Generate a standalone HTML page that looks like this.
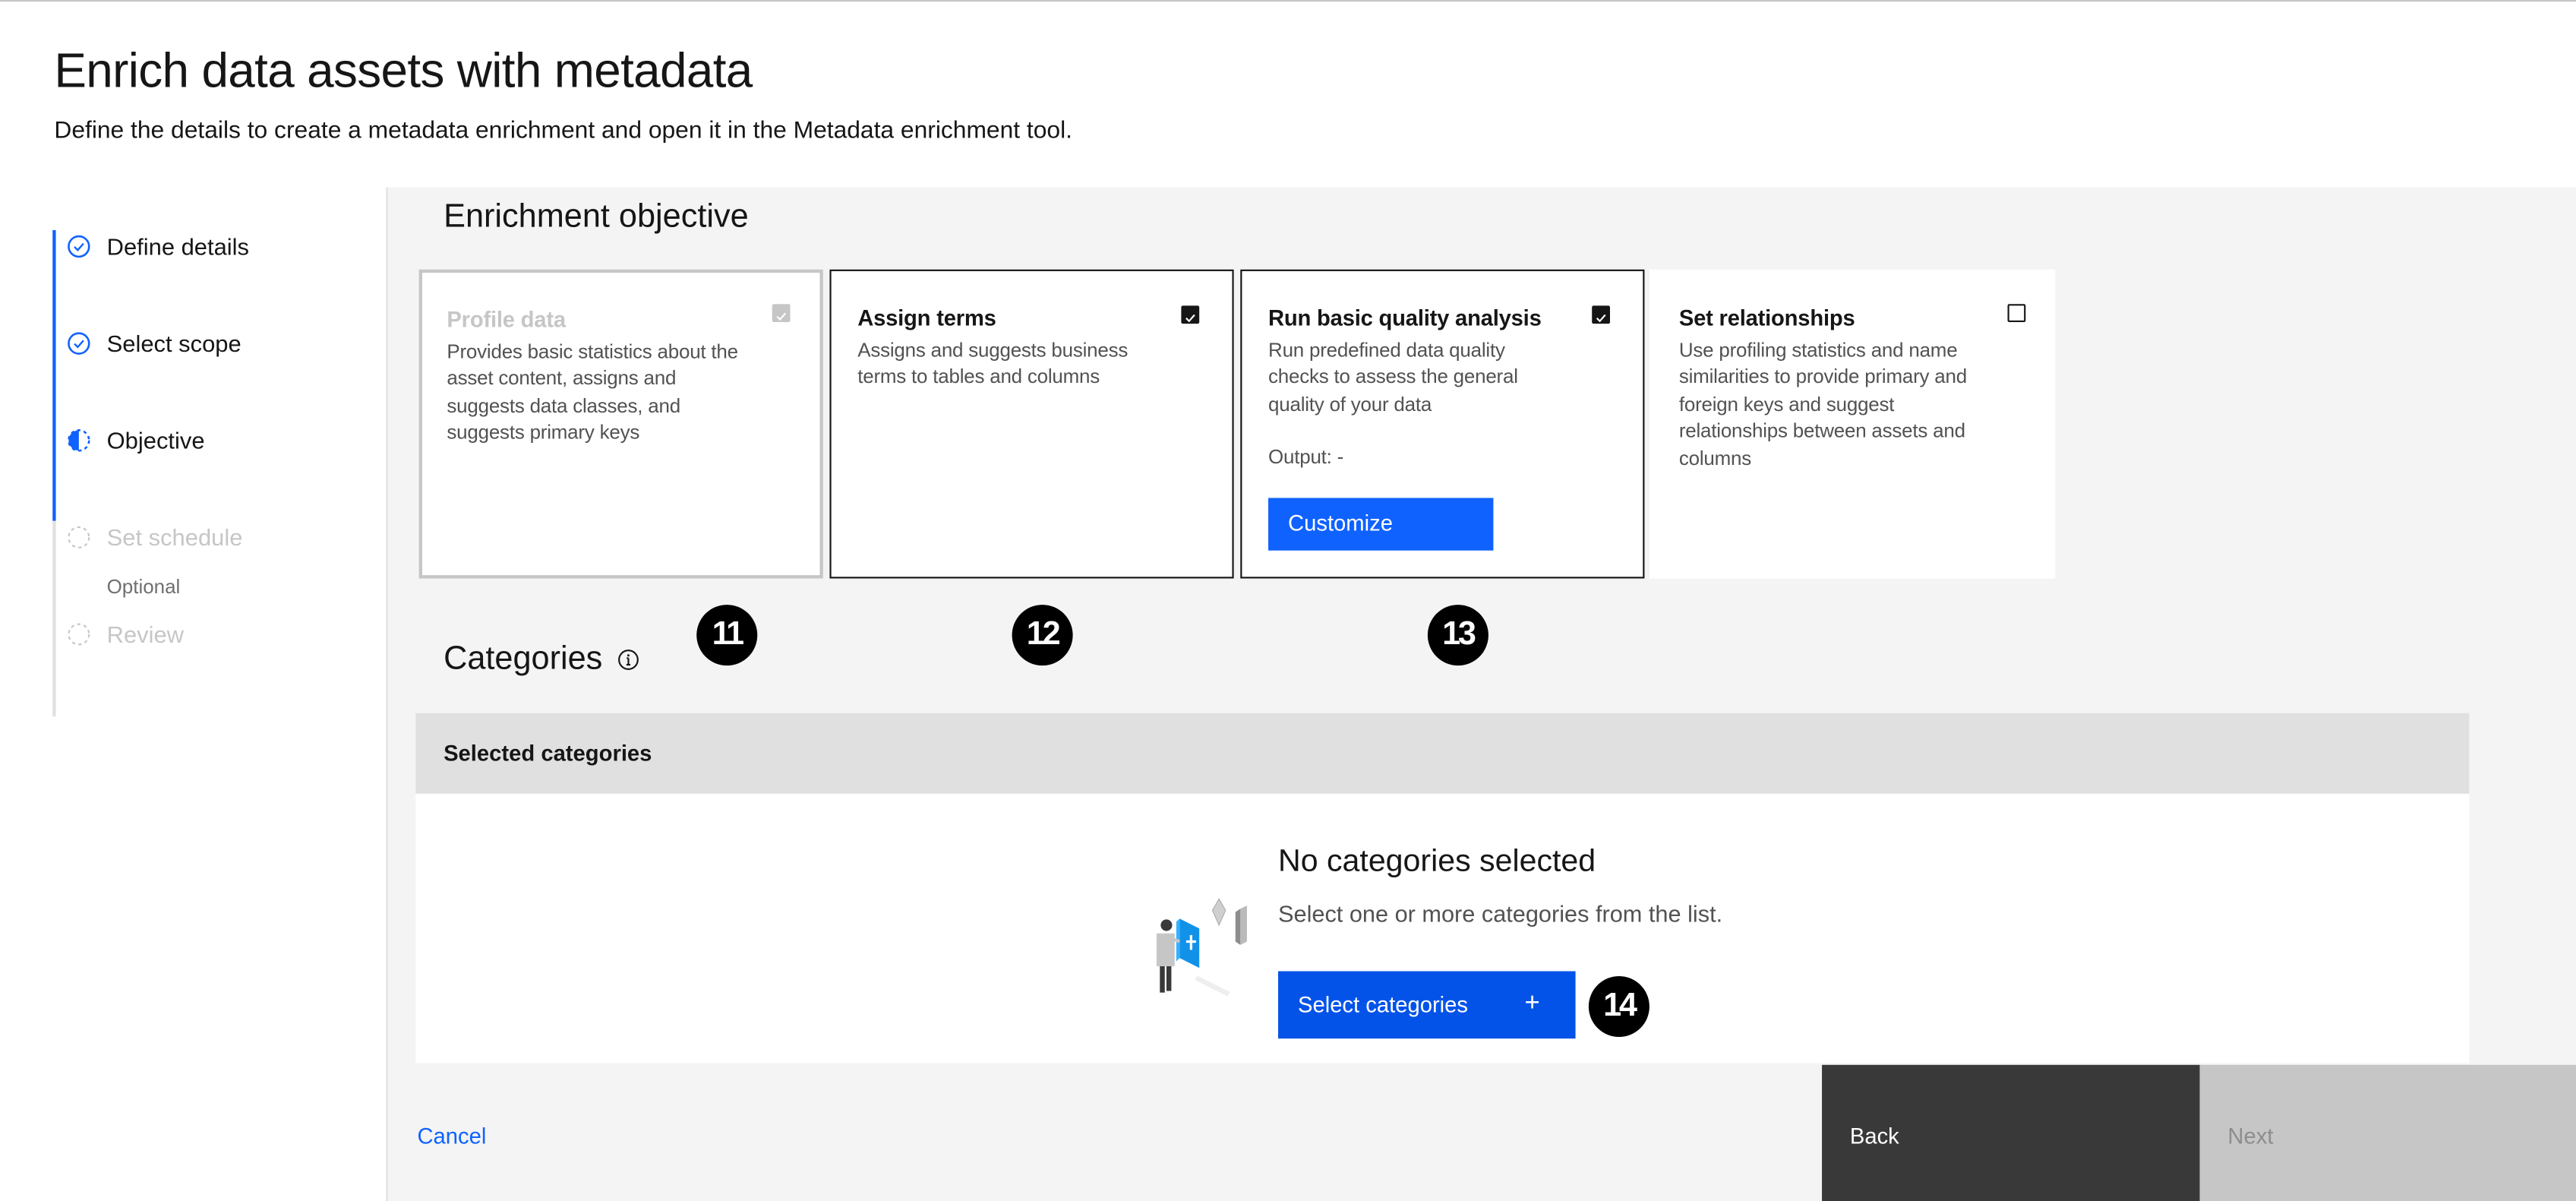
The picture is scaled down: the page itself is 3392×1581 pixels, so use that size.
<!DOCTYPE html>
<html><head><meta charset="utf-8"><style>
*{box-sizing:border-box;margin:0;padding:0}
html,body{width:3392px;height:1580px;overflow:hidden;background:#f4f4f4}
#w{position:absolute;left:0;top:0;width:1568px;height:731px;transform:scale(2.16327);transform-origin:0 0;font-family:"Liberation Sans",sans-serif;color:#161616;background:#f4f4f4}
.a{position:absolute}
.hdr{left:0;top:0;width:1568px;height:114px;background:#fff;border-top:1px solid #c6c6c6}
.side{left:0;top:114px;width:236px;height:617px;background:#fff;border-right:1px solid #e0e0e0}
.step{left:65px;font-size:14.3px;white-space:nowrap}
.card{top:164px;height:188px;width:246px;background:#fff;padding:20px 16px 0 16px}
.card h3{font-size:13.5px;font-weight:bold;margin-top:2px;margin-bottom:4px;letter-spacing:-.1px}
.card p{font-size:12px;line-height:16.4px;color:#525252;letter-spacing:-.1px;max-width:182px}
.cb{position:absolute;right:20px;top:21px;width:11px;height:11px;background:#161616;border-radius:1px}
.badge{width:37px;height:37px;border-radius:50%;background:#000;color:#fff;font-weight:bold;font-size:20px;line-height:37px;text-align:center;letter-spacing:-1.5px}
</style></head><body><div id="w">
<div class="a hdr"></div>
<div class="a" style="left:33px;top:27px;font-size:29.5px;letter-spacing:-.3px">Enrich data assets with metadata</div>
<div class="a" style="left:33px;top:72px;font-size:14.7px">Define the details to create a metadata enrichment and open it in the Metadata enrichment tool.</div>
<div class="a side"></div>
<div class="a" style="left:32px;top:140px;width:2px;height:177px;background:#0f62fe"></div>
<div class="a" style="left:32px;top:317px;width:2px;height:119px;background:#e0e0e0"></div>
<svg class="a" style="left:41px;top:143px" width="14" height="14" viewBox="0 0 14 14"><circle cx="7" cy="7" r="6.2" fill="none" stroke="#0f62fe" stroke-width="1.2"/><path d="M4.3 7.2l2 2 3.5-4" fill="none" stroke="#0f62fe" stroke-width="1.1"/></svg>
<svg class="a" style="left:41px;top:202px" width="14" height="14" viewBox="0 0 14 14"><circle cx="7" cy="7" r="6.2" fill="none" stroke="#0f62fe" stroke-width="1.2"/><path d="M4.3 7.2l2 2 3.5-4" fill="none" stroke="#0f62fe" stroke-width="1.1"/></svg>
<svg class="a" style="left:41px;top:261px" width="14" height="14" viewBox="0 0 14 14"><path d="M7 .8A6.2 6.2 0 0 0 7 13.2z" fill="#0f62fe"/><circle cx="7" cy="7" r="6.2" fill="none" stroke="#0f62fe" stroke-width="1.2" stroke-dasharray="2 2"/></svg>
<svg class="a" style="left:41px;top:320px" width="14" height="14" viewBox="0 0 14 14"><circle cx="7" cy="7" r="6.2" fill="none" stroke="#c6c6c6" stroke-width="1" stroke-dasharray="2 2"/></svg>
<svg class="a" style="left:41px;top:379px" width="14" height="14" viewBox="0 0 14 14"><circle cx="7" cy="7" r="6.2" fill="none" stroke="#c6c6c6" stroke-width="1" stroke-dasharray="2 2"/></svg>
<div class="a step" style="top:143px">Define details</div>
<div class="a step" style="top:202px">Select scope</div>
<div class="a step" style="top:261px">Objective</div>
<div class="a step" style="top:320px;color:#c6c6c6">Set schedule</div>
<div class="a step" style="top:350px;font-size:12px;color:#6f6f6f">Optional</div>
<div class="a step" style="top:379px;color:#c6c6c6">Review</div>

<div class="a" style="left:270px;top:121px;font-size:20px">Enrichment objective</div>
<div class="a card" style="left:255px;border:2px solid #c6c6c6;padding:19px 15px 0 15px"><h3 style="color:#c6c6c6">Profile data</h3><p>Provides basic statistics about the asset content, assigns and suggests data classes, and suggests primary keys</p><div class="cb" style="background:#c6c6c6;right:18px;top:19px"><svg width="11" height="11"><path d="M3 5.6l1.8 1.8 3.3-3.8" fill="none" stroke="#fff" stroke-width="1"/></svg></div></div>
<div class="a card" style="left:505px;border:1px solid #161616;padding:19px 16px 0 16px"><h3>Assign terms</h3><p>Assigns and suggests business terms to tables and columns</p><div class="cb"><svg width="11" height="11"><path d="M3 5.6l1.8 1.8 3.3-3.8" fill="none" stroke="#fff" stroke-width="1"/></svg></div></div>
<div class="a card" style="left:755px;border:1px solid #161616;padding:19px 16px 0 16px"><h3>Run basic quality analysis</h3><p>Run predefined data quality checks to assess the general quality of your data</p><p style="margin-top:16px">Output: -</p><div class="cb"><svg width="11" height="11"><path d="M3 5.6l1.8 1.8 3.3-3.8" fill="none" stroke="#fff" stroke-width="1"/></svg></div>
<div class="a" style="left:16px;top:138px;width:137px;height:32px;background:#0f62fe;color:#fff;font-size:13.5px;padding:8px 12px">Customize</div></div>
<div class="a card" style="left:1004px;width:247px;padding:20px 18px 0 18px"><h3>Set relationships</h3><p>Use profiling statistics and name similarities to provide primary and foreign keys and suggest relationships between assets and columns</p><div class="cb" style="background:#fff;border:1px solid #161616;right:18px"></div></div>

<div class="a" style="left:270px;top:390px;font-size:20px">Categories</div>
<svg class="a" style="left:376px;top:395px" width="13" height="13" viewBox="0 0 13 13"><circle cx="6.5" cy="6.5" r="5.7" fill="none" stroke="#161616" stroke-width="1"/><path d="M6.5 5.5v4M5.3 9.5h2.4M5.5 5.5h1" stroke="#161616" stroke-width="1" fill="none"/><circle cx="6.5" cy="3.8" r=".7" fill="#161616"/></svg>
<div class="a" style="left:253px;top:434px;width:1250px;height:49px;background:#e0e0e0"></div>
<div class="a" style="left:270px;top:451px;font-size:13.5px;font-weight:bold">Selected categories</div>
<div class="a" style="left:253px;top:483px;width:1250px;height:164px;background:#fff"></div>
<div class="a" style="left:778px;top:514px;font-size:19px">No categories selected</div>
<div class="a" style="left:778px;top:549px;font-size:14.2px;color:#525252">Select one or more categories from the list.</div>
<div class="a" style="left:778px;top:591px;width:181px;height:41px;background:#0353e9;color:#fff;font-size:13.5px;padding:13px 12px">Select categories<span style="position:absolute;left:150px;top:11px;font-size:16px">+</span></div>
<svg class="a" style="left:698px;top:543px" width="68" height="66" viewBox="0 0 68 66">
<path d="M44 4l4 7-4 9-4-9z" fill="#d0d0d0" stroke="#aaa" stroke-width=".5"/>
<path d="M57 10l4-2v22l-4 2z" fill="#bbb"/><path d="M54 12l3-2v22l-3-2z" fill="#8d8d8d"/>
<path d="M20 16l12 6v24l-12-6z" fill="#1192e8"/><path d="M18 18l2-2v24l-2 2z" fill="#33b1ff"/>
<path d="M24 30h6M27 26v9" stroke="#fff" stroke-width="1.5"/>
<path d="M30 52l20 10" stroke="#eee" stroke-width="3"/>
<circle cx="12" cy="20" r="3.5" fill="#393939"/><path d="M6 25h11v20H6z" fill="#c6c6c6"/><path d="M8 45h3v16H8zM12 45h3v15h-3z" fill="#393939"/><path d="M15 28l5 2" stroke="#c6c6c6" stroke-width="2"/>
</svg>

<div class="a badge" style="left:424px;top:368px">11</div>
<div class="a badge" style="left:616px;top:368px">12</div>
<div class="a badge" style="left:869px;top:368px">13</div>
<div class="a badge" style="left:967px;top:594px">14</div>

<div class="a" style="left:254px;top:684px;font-size:13.5px;color:#0f62fe">Cancel</div>
<div class="a" style="left:1109px;top:648px;width:230px;height:83px;background:#393939;color:#fff;font-size:13.5px;padding:36px 17px">Back</div>
<div class="a" style="left:1339px;top:648px;width:229px;height:83px;background:#c6c6c6;color:#8d8d8d;font-size:13.5px;padding:36px 17px">Next</div>
</div></body></html>
